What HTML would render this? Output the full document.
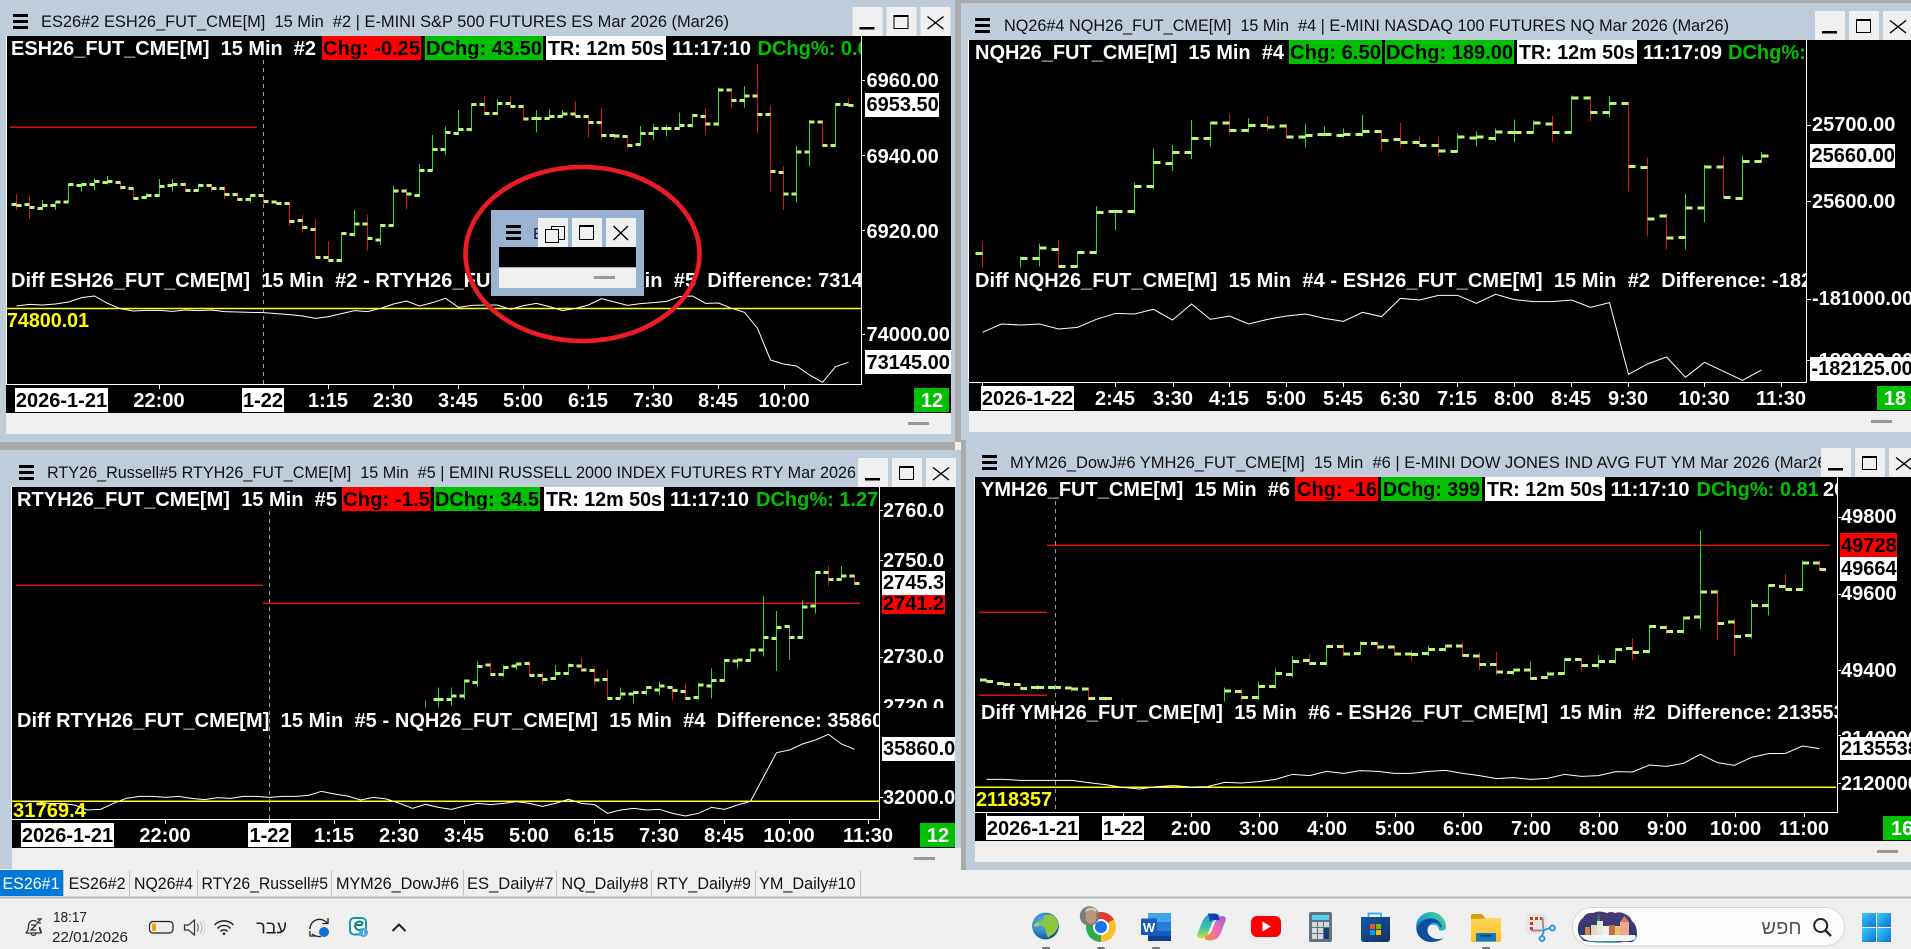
<!DOCTYPE html>
<html><head><meta charset="utf-8"><title>Charts</title>
<style>
html,body{margin:0;padding:0;background:#efefef;overflow:hidden}
svg{display:block}
text{font-family:"Liberation Sans",sans-serif;white-space:pre}
.b{font-weight:bold;font-size:20px;fill:#fff}
.k{font-weight:bold;font-size:20px;fill:#000}
.y{font-weight:bold;font-size:20px;fill:#ff0}
.g{font-weight:bold;font-size:20px;fill:#00c000}
.c{text-anchor:middle}
.d{letter-spacing:.06px}
.t{font-size:16.6px;fill:#111}
.tab{font-size:16.2px;fill:#111}
.w{fill:none;stroke-width:1;shape-rendering:crispEdges;vector-effect:non-scaling-stroke}
.gr{stroke:#1fe01f}.rd{stroke:#e01010}
.tk{fill:none;stroke:#bdf57a;stroke-width:3;shape-rendering:crispEdges;vector-effect:non-scaling-stroke}
.dl{fill:none;stroke:#fff;stroke-width:1;vector-effect:non-scaling-stroke}
.rl{stroke:#d81010;stroke-width:1.5}
.yl{stroke:#ff0;stroke-width:1.5}
.ds{stroke:#999;stroke-width:1;stroke-dasharray:4 4}
.ax{stroke:#fff;stroke-width:1;shape-rendering:crispEdges}
.ic{fill:none;stroke:#333;stroke-width:1.3}
</style></head><body>
<svg width="1911" height="949" viewBox="0 0 1911 949" xmlns="http://www.w3.org/2000/svg" xml:space="preserve">
<defs>
<clipPath id="c1"><rect x="7" y="36" width="854" height="348"/></clipPath>
<clipPath id="c2"><rect x="969" y="40" width="837" height="342"/></clipPath>
<clipPath id="c3"><rect x="12" y="487" width="867" height="332"/></clipPath>
<clipPath id="c4"><rect x="975" y="477" width="862" height="335"/></clipPath>
<clipPath id="t3"><rect x="40" y="450" width="817" height="36"/></clipPath>
<clipPath id="t4"><rect x="1005" y="445" width="816" height="32"/></clipPath>
<g id="btn">
<rect x="0" y="0" width="30" height="29" fill="#f0f0f0"/><rect x="34" y="0" width="30" height="29" fill="#f0f0f0"/><rect x="68" y="0" width="30" height="29" fill="#f0f0f0"/>
<rect x="7" y="20" width="15" height="2.5" fill="#000"/>
<rect x="41.5" y="8.5" width="14" height="13" fill="none" stroke="#000"/><rect x="41" y="8" width="15" height="2" fill="#000"/>
<path d="M75 9.5L91 22M91 9.5L75 22" stroke="#000" stroke-width="1.4" fill="none"/>
</g>
<g id="ham"><rect x="0" y="0" width="15" height="3" fill="#000"/><rect x="0" y="6" width="15" height="3" fill="#000"/><rect x="0" y="12" width="15" height="3" fill="#000"/></g>
<linearGradient id="win" x1="0" y1="0" x2="1" y2="1"><stop offset="0" stop-color="#3ccbf4"/><stop offset="1" stop-color="#0b74d1"/></linearGradient>
<radialGradient id="glb" cx=".35" cy=".35" r=".75"><stop offset="0" stop-color="#5ab6e8"/><stop offset=".6" stop-color="#2a7cc4"/><stop offset="1" stop-color="#123f7a"/></radialGradient>
<linearGradient id="edg" x1="0" y1="1" x2="1" y2="0"><stop offset="0" stop-color="#0f79c8"/><stop offset=".55" stop-color="#1aa8d8"/><stop offset="1" stop-color="#5fdc72"/></linearGradient>
<linearGradient id="cpL" x1="0" y1="0" x2="0" y2="1"><stop offset="0" stop-color="#1f9be8"/><stop offset=".55" stop-color="#36c5a4"/><stop offset="1" stop-color="#d9d83a"/></linearGradient>
<linearGradient id="cpR" x1="1" y1="0" x2="0" y2="1"><stop offset="0" stop-color="#a35ae0"/><stop offset=".55" stop-color="#ef6fa8"/><stop offset="1" stop-color="#f5963a"/></linearGradient>
<linearGradient id="fld" x1="0" y1="0" x2="0" y2="1"><stop offset="0" stop-color="#ffd75e"/><stop offset="1" stop-color="#fbbf24"/></linearGradient>
<linearGradient id="sto" x1="0" y1="0" x2="1" y2="1"><stop offset="0" stop-color="#0d5aa8"/><stop offset="1" stop-color="#17305f"/></linearGradient>
<linearGradient id="sky" x1="0" y1="0" x2="0" y2="1"><stop offset="0" stop-color="#4a3a78"/><stop offset="1" stop-color="#1c3a70"/></linearGradient>
</defs>

<!-- window backgrounds -->
<rect width="1911" height="949" fill="#efefef"/>
<rect x="0" y="0" width="955" height="442" fill="#bfcddb"/>
<rect x="955" y="0" width="956" height="3" fill="#aaa"/>
<rect x="955" y="0" width="6" height="442" fill="#aaa"/>
<rect x="961" y="3" width="950" height="437" fill="#bfcddb"/>
<rect x="966" y="440" width="945" height="430" fill="#bfcddb"/>
<rect x="0" y="442" width="955" height="8" fill="#aaa"/>
<rect x="0" y="450" width="961" height="419" fill="#bfcddb"/>
<rect x="961" y="440" width="5" height="430" fill="#aaa"/>

<!-- PANEL 1 -->
<use href="#ham" x="13" y="14"/>
<text class="t" x="41" y="27" textLength="688" lengthAdjust="spacingAndGlyphs">ES26#2 ESH26_FUT_CME[M]  15 Min  #2 | E-MINI S&amp;P 500 FUTURES ES Mar 2026 (Mar26)</text>
<use href="#btn" x="852.5" y="7"/>
<rect x="6" y="36" width="945" height="377" fill="#000"/>
<rect x="6" y="413" width="945" height="21" fill="#efefef"/>
<rect x="908" y="422" width="21" height="3" fill="#999"/>
<path class="ds" d="M263.5 60V384"/>
<path class="rl" d="M10 127.3H257"/>
<g transform="translate(16.5 0) scale(13 .33333)">
<path class="w gr" d="M2 600V630M3 605V630M4 550V606M5 550V575M6 535V570M7 528V553M10 580V595M11 537V590M12 537V575M14 550V575M18 583V608M25 697V788M26 630V710M28 672V735M29 558V680M31 492V592M32 405V513M33 380V465M34 330V405M35 310V395M37 298V345M40 330V398M41 328V358M42 330V352M48 378V436M49 370V420M50 375V410M51 338V388M52 342V382M54 262V378M56 258V322M60 438V608M61 360V500M63 310V440"/>
<path class="w rd" d="M0 582V630M1 588V656M8 544V570M9 562V600M13 548V575M15 553V578M16 560V597M17 578V603M19 580V605M20 602V617M21 606V678M22 645V698M23 655V775M24 725V785M27 645V752M30 565V628M36 288V345M38 288V325M39 315V362M43 303V352M44 345V412M45 322V420M46 400V420M47 405V445M53 325V402M55 265V325M57 192V400M58 315V575M59 498V630M62 360V440M64 295V320"/>
<path class="tk" d="M0 613h-.38M0 617h.38M1 613h-.38M1 622h.38M2 625h-.38M2 617h.38M3 617h-.38M3 606h.38M4 606h-.38M4 553h.38M5 556h-.38M5 553h.38M6 553h-.38M6 544h.38M7 547h-.38M7 544h.38M8 547h-.38M8 562h.38M9 565h-.38M9 595h.38M10 592h-.38M10 586h.38M11 586h-.38M11 559h.38M12 556h-.38M12 553h.38M13 553h-.38M13 571h.38M14 571h-.38M14 556h.38M15 556h-.38M15 565h.38M16 565h-.38M16 583h.38M17 583h-.38M17 598h.38M18 598h-.38M18 586h.38M19 586h-.38M19 604h.38M20 606h-.38M20 610h.38M21 610h-.38M21 664h.38M22 661h-.38M22 682h.38M23 688h-.38M23 772h.38M24 772h-.38M24 782h.38M25 782h-.38M25 700h.38M26 703h-.38M26 672h.38M27 672h-.38M27 716h.38M28 720h-.38M28 676h.38M29 676h-.38M29 573h.38M30 573h-.38M30 582h.38M31 586h-.38M31 511h.38M32 511h-.38M32 448h.38M33 448h-.38M33 397h.38M34 400h-.38M34 389h.38M35 389h-.38M35 313h.38M36 313h-.38M36 340h.38M37 340h-.38M37 310h.38M38 310h-.38M38 320h.38M39 320h-.38M39 357h.38M40 355h-.38M40 355h.38M41 355h-.38M41 349h.38M42 349h-.38M42 342h.38M43 342h-.38M43 349h.38M44 349h-.38M44 368h.38M45 368h-.38M45 406h.38M46 406h-.38M46 408h.38M47 410h-.38M47 436h.38M48 434h-.38M48 400h.38M49 400h-.38M49 385h.38M50 385h-.38M50 385h.38M51 385h-.38M51 377h.38M52 377h-.38M52 347h.38M53 350h-.38M53 372h.38M54 372h-.38M54 270h.38M55 270h-.38M55 302h.38M56 302h-.38M56 288h.38M57 288h-.38M57 343h.38M58 343h-.38M58 515h.38M59 518h-.38M59 582h.38M60 582h-.38M60 456h.38M61 456h-.38M61 366h.38M62 366h-.38M62 436h.38M63 436h-.38M63 313h.38M64 313h-.38M64 316h.38"/>
</g>
<g clip-path="url(#c1)">
<text class="b" x="11" y="55" textLength="305" lengthAdjust="spacingAndGlyphs">ESH26_FUT_CME[M]  15 Min  #2</text>
<rect x="322" y="36" width="99" height="24" fill="#f00"/><text class="k" x="323" y="55" textLength="97" lengthAdjust="spacingAndGlyphs">Chg: -0.25</text>
<rect x="425" y="36" width="118" height="24" fill="#00c000"/><text class="k" x="426" y="55" textLength="116" lengthAdjust="spacingAndGlyphs">DChg: 43.50</text>
<rect x="546" y="36" width="120" height="24" fill="#fff"/><text class="k" x="548" y="55" textLength="116" lengthAdjust="spacingAndGlyphs">TR: 12m 50s</text>
<text class="b" x="672" y="55" textLength="79" lengthAdjust="spacingAndGlyphs">11:17:10</text>
<text class="g" x="757.5" y="55">DChg%: 0.61</text>
<text class="b d" x="11" y="287">Diff ESH26_FUT_CME[M]  15 Min  #2 - RTYH26_FUT_CME[M]  15 Min  #5  Difference: 73145</text>
</g>
<path class="yl" d="M7 308.5H861"/>
<g transform="translate(16.5 0) scale(13 .33333)"><polyline class="dl" points="0,918 1,913 2,915 3,912 4,906 5,893 6,888 7,910 8,926 9,933 10,931 11,931 12,934 13,930 14,932 15,930 16,935 17,936 18,937 19,938 20,941 21,944 22,948 23,955 24,950 25,941 26,932 27,935 28,925 29,912 30,903 31,918 32,908 33,895 34,922 35,916 36,915 37,915 38,928 39,917 40,910 41,920 42,932 43,925 44,915 45,896 46,906 47,916 48,911 49,908 50,904 51,890 52,888 53,910 54,909 55,925 56,937 57,985 58,1080 59,1092 60,1098 61,1125 62,1147 63,1100 64,1087"/></g>
<text class="y" x="7" y="327" textLength="82" lengthAdjust="spacingAndGlyphs">74800.01</text>
<path class="ax" d="M6.5 36V384M861.5 36V384.5M6 384.5H862M861 80.5H865M861 155.5H865M861 230.5H865M861 334.5H865"/>
<path class="ax" d="M159.5 384V389M328.5 384V389M393.5 384V389M458.5 384V389M523.5 384V389M588.5 384V389M653.5 384V389M718.5 384V389M784.5 384V389"/>
<text class="b" x="866.5" y="87">6960.00</text>
<rect x="865" y="93" width="74" height="24" fill="#fff"/><text class="k" x="866.5" y="111">6953.50</text>
<text class="b" x="866.5" y="163">6940.00</text>
<text class="b" x="866.5" y="238">6920.00</text>
<text class="b" x="866.5" y="341">74000.00</text>
<rect x="865" y="350" width="86" height="24" fill="#fff"/><text class="k" x="866.5" y="369">73145.00</text>
<rect x="15" y="388" width="93" height="24" fill="#fff"/><text class="k c" x="61.5" y="407">2026-1-21</text>
<text class="b c" x="159" y="407">22:00</text>
<rect x="242" y="388" width="42" height="24" fill="#fff"/><text class="k c" x="263" y="407">1-22</text>
<text class="b c" x="328" y="407">1:15</text><text class="b c" x="393" y="407">2:30</text><text class="b c" x="458" y="407">3:45</text><text class="b c" x="523" y="407">5:00</text><text class="b c" x="588" y="407">6:15</text><text class="b c" x="653" y="407">7:30</text><text class="b c" x="718" y="407">8:45</text><text class="b c" x="784" y="407">10:00</text>
<rect x="914" y="388" width="35" height="24" fill="#00c000"/><text class="b c" x="932" y="407">12</text>

<!-- floating mini window + ellipse -->
<rect x="491" y="210" width="153" height="86" fill="#9ab3d0"/>
<use href="#ham" x="506" y="225"/>
<text x="533" y="239" style="font-size:16px;fill:#14145a">E</text>
<rect x="538" y="218" width="30" height="29" fill="#f0f0f0"/><rect x="572" y="218" width="30" height="29" fill="#f0f0f0"/><rect x="606" y="218" width="30" height="29" fill="#f0f0f0"/>
<rect x="551.5" y="226.5" width="13" height="13" fill="#f0f0f0" stroke="#000"/><rect x="545.5" y="229.5" width="13" height="13" fill="#f0f0f0" stroke="#000"/>
<rect x="579.5" y="225.5" width="14" height="14" fill="none" stroke="#000"/><rect x="579" y="225" width="15" height="2" fill="#000"/>
<path d="M613.5 226L628 240M628 226L613.5 240" stroke="#000" stroke-width="1.4" fill="none"/>
<rect x="499" y="247" width="137" height="20" fill="#000"/>
<rect x="499" y="268" width="137" height="20" fill="#efefef"/>
<rect x="594" y="276" width="21" height="3" fill="#999"/>
<ellipse cx="582.5" cy="254" rx="117" ry="87" fill="none" stroke="#ed1c24" stroke-width="4.6"/>

<!-- PANEL 2 -->
<use href="#ham" x="975" y="18"/>
<text class="t" x="1004" y="31" textLength="725" lengthAdjust="spacingAndGlyphs">NQ26#4 NQH26_FUT_CME[M]  15 Min  #4 | E-MINI NASDAQ 100 FUTURES NQ Mar 2026 (Mar26)</text>
<use href="#btn" x="1815" y="11"/>
<rect x="969" y="40" width="942" height="371" fill="#000"/>
<rect x="969" y="411" width="942" height="21" fill="#efefef"/>
<rect x="1871" y="420" width="21" height="3" fill="#999"/>
<g transform="translate(982.5 0) scale(19 .33333)">
<path class="w gr" d="M2 770V803M3 730V800M5 755V803M6 620V760M7 632V692M8 547V642M9 447V568M10 435V513M11 360V477M12 365V440M14 355V398M17 372V443M18 380V410M19 385V412M20 345V410M25 400V458M26 395V440M27 385V425M28 358V426M29 362V400M31 286V400M33 288V353M37 582V748M38 495V668M40 468V597M41 456V488"/>
<path class="w rd" d="M0 726V802M4 720V803M13 340V405M15 348V393M16 372V416M21 392V452M22 369V443M23 410V440M24 412V470M30 348V426M32 290V365M34 305V575M35 473V710M36 640V748M39 470V592"/>
<path class="tk" d="M0 760h-.38M2 775h.38M3 775h-.38M3 744h.38M4 748h-.38M4 800h.38M5 800h-.38M5 757h.38M6 757h-.38M6 637h.38M7 634h-.38M7 634h.38M8 634h-.38M8 560h.38M9 560h-.38M9 488h.38M10 490h-.38M10 457h.38M11 457h-.38M11 415h.38M12 415h-.38M12 369h.38M13 369h-.38M13 391h.38M14 391h-.38M14 376h.38M15 376h-.38M15 381h.38M16 378h-.38M16 411h.38M17 411h-.38M17 407h.38M18 403h-.38M18 403h.38M19 407h-.38M19 403h.38M20 403h-.38M20 395h.38M21 395h-.38M21 421h.38M22 418h-.38M22 427h.38M23 427h-.38M23 436h.38M24 436h-.38M24 453h.38M25 455h-.38M25 411h.38M26 414h-.38M26 411h.38M27 415h-.38M27 396h.38M28 397h-.38M28 397h.38M29 397h-.38M29 369h.38M30 372h-.38M30 397h.38M31 397h-.38M31 294h.38M32 294h-.38M32 337h.38M33 337h-.38M33 310h.38M34 310h-.38M34 500h.38M35 502h-.38M35 657h.38M36 648h-.38M36 714h.38M37 712h-.38M37 624h.38M38 624h-.38M38 501h.38M39 501h-.38M39 592h.38M40 595h-.38M40 484h.38M41 484h-.38M41 468h.38"/>
</g>
<rect x="969" y="268" width="842" height="114" fill="#000"/>
<g clip-path="url(#c2)">
<text class="b" x="975" y="59" textLength="309" lengthAdjust="spacingAndGlyphs">NQH26_FUT_CME[M]  15 Min  #4</text>
<rect x="1289" y="40" width="93" height="24" fill="#00c000"/><text class="k" x="1290" y="59" textLength="91" lengthAdjust="spacingAndGlyphs">Chg: 6.50</text>
<rect x="1385" y="40" width="129" height="24" fill="#00c000"/><text class="k" x="1386" y="59" textLength="127" lengthAdjust="spacingAndGlyphs">DChg: 189.00</text>
<rect x="1517" y="40" width="120" height="24" fill="#fff"/><text class="k" x="1519" y="59" textLength="116" lengthAdjust="spacingAndGlyphs">TR: 12m 50s</text>
<text class="b" x="1643" y="59" textLength="79" lengthAdjust="spacingAndGlyphs">11:17:09</text>
<text class="g" x="1728" y="59">DChg%:</text>
<text class="b d" x="975" y="287">Diff NQH26_FUT_CME[M]  15 Min  #4 - ESH26_FUT_CME[M]  15 Min  #2  Difference: -182125</text>
</g>
<g transform="translate(982.5 0) scale(19 .33333)"><polyline class="dl" points="0,997 1,972 2,975 3,972 4,987 5,982 6,958 7,940 8,942 9,928 10,960 11,912 12,958 13,948 14,972 15,958 16,948 17,942 18,955 19,964 20,937 21,950 22,895 23,900 24,886 25,886 26,910 27,883 28,899 29,905 30,905 31,900 32,922 33,908 34,1123 35,1092 36,1071 37,1132 38,1087 39,1114 40,1141 41,1110"/></g>
<path class="ax" d="M968.5 40V382M1806.5 40V382.5M969 382.5H1807M1806 125.5H1811M1806 201.5H1811M1806 299.5H1811M1806 360.5H1811"/>
<path class="ax" d="M982.5 382V387M1115.5 382V387M1173.5 382V387M1229.5 382V387M1286.5 382V387M1343.5 382V387M1400.5 382V387M1457.5 382V387M1514.5 382V387M1571.5 382V387M1628.5 382V387M1704.5 382V387M1781.5 382V387"/>
<text class="b" x="1812" y="131">25700.00</text>
<rect x="1810" y="144" width="85" height="24" fill="#fff"/><text class="k" x="1811.5" y="162">25660.00</text>
<text class="b" x="1812" y="208">25600.00</text>
<text class="b" x="1812" y="305">-181000.00</text>
<text class="b" x="1812" y="367">-182000.00</text>
<rect x="1810" y="357" width="101" height="24" fill="#fff"/><text class="k" x="1811.5" y="375">-182125.00</text>
<rect x="981" y="386" width="93" height="24" fill="#fff"/><text class="k c" x="1027.5" y="405">2026-1-22</text>
<text class="b c" x="1115" y="405">2:45</text><text class="b c" x="1173" y="405">3:30</text><text class="b c" x="1229" y="405">4:15</text><text class="b c" x="1286" y="405">5:00</text><text class="b c" x="1343" y="405">5:45</text><text class="b c" x="1400" y="405">6:30</text><text class="b c" x="1457" y="405">7:15</text><text class="b c" x="1514" y="405">8:00</text><text class="b c" x="1571" y="405">8:45</text><text class="b c" x="1628" y="405">9:30</text><text class="b c" x="1704" y="405">10:30</text><text class="b c" x="1781" y="405">11:30</text>
<rect x="1877" y="386" width="34" height="24" fill="#00c000"/><text class="b c" x="1895" y="405">18</text>

<!-- PANEL 3 -->
<use href="#ham" x="19" y="465"/>
<g clip-path="url(#t3)"><text class="t" x="47" y="478" textLength="809" lengthAdjust="spacingAndGlyphs">RTY26_Russell#5 RTYH26_FUT_CME[M]  15 Min  #5 | EMINI RUSSELL 2000 INDEX FUTURES RTY Mar 2026</text></g>
<use href="#btn" x="858" y="458"/>
<rect x="12" y="487" width="943" height="361" fill="#000"/>
<rect x="12" y="848" width="949" height="21" fill="#efefef"/>
<rect x="914" y="857" width="21" height="3" fill="#999"/>
<path class="rl" d="M16 585.3H263M263 603.3H860"/>
<text class="b" x="883" y="713">2720.0</text>
<g transform="translate(425.5 440) scale(13 .33333)">
<path class="w gr" d="M0 782V803M1 742V803M2 742V797M3 718V778M4 664V740M6 675V710M7 668V690M10 675V720M11 670V705M15 742V775M16 752V790M17 738V765M18 726V765M21 728V778M22 685V775M23 655V725M24 655V685M25 628V665M26 468V650M27 513V693M29 482V595M30 395V520M32 378V420"/>
<path class="w rd" d="M5 668V708M8 665V708M9 695V735M12 652V695M13 682V735M14 688V778M19 740V782M20 730V780M31 378V438M33 405V435"/>
<path class="w" stroke="#888" d="M28 555V660"/>
<path class="tk" d="M1 778h-.38M1 778h.38M2 778h-.38M2 768h.38M3 768h-.38M3 723h.38M4 728h-.38M4 679h.38M5 675h-.38M5 704h.38M6 704h-.38M6 682h.38M7 678h-.38M7 672h.38M8 670h-.38M8 706h.38M9 706h-.38M9 718h.38M10 715h-.38M10 700h.38M11 700h-.38M11 676h.38M12 678h-.38M12 690h.38M13 692h-.38M13 720h.38M14 718h-.38M14 775h.38M15 775h-.38M15 762h.38M16 762h-.38M16 758h.38M17 758h-.38M17 743h.38M18 750h-.38M18 738h.38M19 743h-.38M19 752h.38M20 755h-.38M20 775h.38M21 772h-.38M21 735h.38M22 738h-.38M22 722h.38M23 722h-.38M23 662h.38M24 663h-.38M24 660h.38M25 662h-.38M25 630h.38M26 630h-.38M26 592h.38M27 595h-.38M27 562h.38M28 560h-.38M28 592h.38M29 592h-.38M29 501h.38M30 498h-.38M30 397h.38M31 397h-.38M31 418h.38M32 418h-.38M32 408h.38M33 408h-.38M33 430h.38"/>
</g>
<rect x="12" y="708" width="943" height="111" fill="#000"/>
<path class="ds" d="M269.5 511V819"/>
<g clip-path="url(#c3)">
<text class="b" x="17" y="506" textLength="320" lengthAdjust="spacingAndGlyphs">RTYH26_FUT_CME[M]  15 Min  #5</text>
<rect x="342" y="487" width="88.5" height="24" fill="#f00"/><text class="k" x="343" y="506" textLength="87" lengthAdjust="spacingAndGlyphs">Chg: -1.5</text>
<rect x="434" y="487" width="106" height="24" fill="#00c000"/><text class="k" x="435" y="506" textLength="104" lengthAdjust="spacingAndGlyphs">DChg: 34.5</text>
<rect x="544" y="487" width="120" height="24" fill="#fff"/><text class="k" x="546" y="506" textLength="116" lengthAdjust="spacingAndGlyphs">TR: 12m 50s</text>
<text class="b" x="670" y="506" textLength="79" lengthAdjust="spacingAndGlyphs">11:17:10</text>
<text class="g" x="756" y="506">DChg%: 1.27</text>
<text class="b d" x="17" y="727">Diff RTYH26_FUT_CME[M]  15 Min  #5 - NQH26_FUT_CME[M]  15 Min  #4  Difference: 35860</text>
</g>
<path class="yl" d="M12 801.3H879"/>
<g transform="translate(22.5 440) scale(13 .33333)"><polyline class="dl" points="0,1085 1,1085 2,1090 3,1090 4,1095 5,1110 6,1108 7,1090 8,1075 9,1069 10,1069 11,1072 12,1069 13,1075 14,1079 15,1073 16,1075 17,1069 18,1069 19,1072 20,1069 21,1069 22,1066 23,1054 24,1062 25,1068 26,1080 27,1072 28,1077 29,1090 30,1105 31,1093 32,1102 33,1108 34,1098 35,1090 36,1094 37,1090 38,1085 39,1090 40,1099 41,1090 42,1078 43,1090 44,1094 45,1120 46,1110 47,1105 48,1110 49,1108 50,1120 51,1128 52,1120 53,1102 54,1108 55,1095 56,1084 57,1011 58,938 59,930 60,912 61,900 62,883 63,912 64,928"/></g>
<g clip-path="url(#c3)"><text class="y" x="13" y="817" textLength="73" lengthAdjust="spacingAndGlyphs">31769.4</text></g>
<path class="ax" d="M11.5 487V819M879.5 487V819.5M12 819.5H880M879 510.5H883M879 560.5H883M879 657.5H883M879 797.5H883"/>
<path class="ax" d="M165.5 819V824M269.5 819V824M334.5 819V824M399.5 819V824M464.5 819V824M529.5 819V824M594.5 819V824M659.5 819V824M724.5 819V824M789.5 819V824M868.5 819V824"/>
<text class="b" x="883" y="517">2760.0</text>
<text class="b" x="883" y="567">2750.0</text>
<rect x="882" y="571" width="63" height="24" fill="#fff"/><text class="k" x="883" y="589">2745.3</text>
<rect x="882" y="595" width="63" height="19" fill="#f00"/><text class="k" x="883" y="610">2741.2</text>
<text class="b" x="883" y="663">2730.0</text>
<rect x="882" y="737" width="73" height="24" fill="#fff"/><text class="k" x="883" y="755">35860.0</text>
<text class="b" x="883" y="804">32000.0</text>
<rect x="21" y="823" width="93" height="24" fill="#fff"/><text class="k c" x="67.5" y="842">2026-1-21</text>
<text class="b c" x="165" y="842">22:00</text>
<rect x="248" y="823" width="43" height="24" fill="#fff"/><text class="k c" x="269.5" y="842">1-22</text>
<text class="b c" x="334" y="842">1:15</text><text class="b c" x="399" y="842">2:30</text><text class="b c" x="464" y="842">3:45</text><text class="b c" x="529" y="842">5:00</text><text class="b c" x="594" y="842">6:15</text><text class="b c" x="659" y="842">7:30</text><text class="b c" x="724" y="842">8:45</text><text class="b c" x="789" y="842">10:00</text><text class="b c" x="868" y="842">11:30</text>
<rect x="920" y="823" width="35" height="24" fill="#00c000"/><text class="b c" x="938" y="842">12</text>

<!-- PANEL 4 -->
<use href="#ham" x="982" y="455"/>
<g clip-path="url(#t4)"><text class="t" x="1010" y="468" textLength="822" lengthAdjust="spacingAndGlyphs">MYM26_DowJ#6 YMH26_FUT_CME[M]  15 Min  #6 | E-MINI DOW JONES IND AVG FUT YM Mar 2026 (Mar26)</text></g>
<use href="#btn" x="1821" y="448"/>
<rect x="975" y="477" width="936" height="364" fill="#000"/>
<rect x="975" y="841" width="936" height="21" fill="#efefef"/>
<rect x="1877" y="850" width="21" height="3" fill="#999"/>
<path class="rl" d="M1047 545.3H1830M979 612.3H1047M979 695.3H1047"/>
<g transform="translate(986.5 440) scale(17 .33333)">
<path class="w gr" d="M3 735V750M4 736V750M14 743V785M16 725V780M17 685V745M18 648V712M20 615V675M22 605V645M26 616V648M27 615V635M31 688V705M33 695V715M34 655V705M36 645V685M37 625V670M39 555V640M41 530V580M42 272V567M45 480V595M46 435V527M48 362V452"/>
<path class="w rd" d="M0 715V730M1 726V745M2 730V750M5 740V755M6 742V780M7 770V785M8 778V785M15 748V785M19 642V680M21 610V650M23 605V630M24 617V650M25 630V666M28 606V650M29 636V690M30 636V705M35 655V695M38 595V660M40 555V585M43 448V602M44 535V650M47 402V450M49 362V392"/>
<path class="w" stroke="#888" d="M32 665V720"/>
<path class="tk" d="M0 720h-.38M0 724h.38M1 731h-.38M1 734h.38M2 734h-.38M2 745h.38M3 742h-.38M3 743h.38M4 742h-.38M4 743h.38M5 744h-.38M5 747h.38M6 747h-.38M6 776h.38M7 776h-.38M7 776h.38M14 753h.38M15 755h-.38M15 772h.38M16 772h-.38M16 740h.38M17 740h-.38M17 701h.38M18 704h-.38M18 664h.38M19 662h-.38M19 670h.38M20 670h-.38M20 619h.38M21 619h-.38M21 642h.38M22 640h-.38M22 610h.38M23 610h-.38M23 621h.38M24 621h-.38M24 642h.38M25 642h-.38M25 644h.38M26 640h-.38M26 629h.38M27 629h-.38M27 618h.38M28 618h-.38M28 646h.38M29 648h-.38M29 673h.38M30 673h-.38M30 696h.38M31 698h-.38M31 690h.38M32 690h-.38M32 715h.38M33 712h-.38M33 702h.38M34 700h-.38M34 658h.38M35 658h-.38M35 677h.38M36 677h-.38M36 664h.38M37 664h-.38M37 628h.38M38 625h-.38M38 638h.38M39 634h-.38M39 559h.38M40 562h-.38M40 575h.38M41 575h-.38M41 534h.38M42 531h-.38M42 456h.38M43 456h-.38M43 550h.38M44 546h-.38M44 590h.38M45 586h-.38M45 496h.38M46 496h-.38M46 437h.38M47 440h-.38M47 449h.38M48 449h-.38M48 369h.38M49 369h-.38M49 388h.38"/>
</g>
<rect x="975" y="702" width="936" height="110" fill="#000"/>
<path class="ds" d="M1055.5 501V812"/>
<g clip-path="url(#c4)">
<text class="b" x="981" y="496" textLength="309" lengthAdjust="spacingAndGlyphs">YMH26_FUT_CME[M]  15 Min  #6</text>
<rect x="1295" y="477" width="83" height="24" fill="#f00"/><text class="k" x="1297" y="496" textLength="80" lengthAdjust="spacingAndGlyphs">Chg: -16</text>
<rect x="1381" y="477" width="101" height="24" fill="#00c000"/><text class="k" x="1383" y="496" textLength="97" lengthAdjust="spacingAndGlyphs">DChg: 399</text>
<rect x="1485" y="477" width="120" height="24" fill="#fff"/><text class="k" x="1487" y="496" textLength="116" lengthAdjust="spacingAndGlyphs">TR: 12m 50s</text>
<text class="b" x="1610.5" y="496" textLength="79" lengthAdjust="spacingAndGlyphs">11:17:10</text>
<text class="g" x="1696.5" y="496">DChg%: 0.81</text>
<text class="b" x="1823" y="496">2026</text>
<text class="b d" x="981" y="719">Diff YMH26_FUT_CME[M]  15 Min  #6 - ESH26_FUT_CME[M]  15 Min  #2  Difference: 213553</text>
</g>
<path class="yl" d="M975 787.3H1836"/>
<g transform="translate(986.5 440) scale(17 .33333)"><polyline class="dl" points="0,1018 1,1018 2,1021 3,1021 4,1021 5,1021 6,1028 7,1034 8,1042 9,1047 10,1040 11,1037 12,1041 13,1040 14,1027 15,1029 16,1025 17,1018 18,1003 19,1007 20,994 21,1000 22,992 23,994 24,1000 25,1000 26,994 27,991 28,1000 29,1007 30,1016 31,1013 32,1018 33,1015 34,1003 35,1009 36,1007 37,995 38,996 39,975 40,979 41,970 42,943 43,968 44,976 45,952 46,941 47,940 48,918 49,926"/></g>
<text class="y" x="976" y="806" textLength="76" lengthAdjust="spacingAndGlyphs">2118357</text>
<path class="ax" d="M974.5 477V812M1837.5 477V812.5M975 812.5H1838M1837 517.5H1841M1837 594.5H1841M1837 670.5H1841M1837 735.5H1841M1837 783.5H1841"/>
<path class="ax" d="M986.5 812V817M1123.5 812V817M1191.5 812V817M1259.5 812V817M1327.5 812V817M1395.5 812V817M1463.5 812V817M1531.5 812V817M1599.5 812V817M1667.5 812V817M1735.5 812V817M1804.5 812V817"/>
<text class="b" x="1841" y="523">49800</text>
<rect x="1840" y="533" width="57" height="24" fill="#f00"/><text class="k" x="1841" y="552">49728</text>
<rect x="1840" y="557" width="57" height="24" fill="#fff"/><text class="k" x="1841" y="575">49664</text>
<text class="b" x="1841" y="600">49600</text>
<text class="b" x="1841" y="677">49400</text>
<text class="b" x="1841" y="745">2140000</text>
<rect x="1840" y="737" width="71" height="23" fill="#fff"/><text class="k" x="1841" y="755">2135538</text>
<text class="b" x="1841" y="790">2120000</text>
<rect x="986" y="816" width="93" height="24" fill="#fff"/><text class="k c" x="1032.5" y="835">2026-1-21</text>
<rect x="1102" y="816" width="42" height="24" fill="#fff"/><text class="k c" x="1123" y="835">1-22</text>
<text class="b c" x="1191" y="835">2:00</text><text class="b c" x="1259" y="835">3:00</text><text class="b c" x="1327" y="835">4:00</text><text class="b c" x="1395" y="835">5:00</text><text class="b c" x="1463" y="835">6:00</text><text class="b c" x="1531" y="835">7:00</text><text class="b c" x="1599" y="835">8:00</text><text class="b c" x="1667" y="835">9:00</text><text class="b c" x="1735.5" y="835">10:00</text><text class="b c" x="1804" y="835">11:00</text>
<rect x="1883" y="816" width="28" height="24" fill="#00c000"/><text class="b" x="1891" y="835">16</text>

<!-- TABS -->
<rect x="0" y="870" width="63" height="26" fill="#0078d7"/>
<path d="M63.5 870V896M129.5 870V896M197.5 870V896M331.5 870V896M463.5 870V896M556.5 870V896M651.5 870V896M755.5 870V896M860.5 870V896" stroke="#c4c4c4" fill="none" shape-rendering="crispEdges"/>
<rect x="0" y="896.5" width="1911" height="2" fill="#b4b4b4"/>
<text class="tab" x="2.5" y="889" textLength="57" lengthAdjust="spacingAndGlyphs" style="fill:#fff">ES26#1</text>
<text class="tab" x="68.6" y="889" textLength="57" lengthAdjust="spacingAndGlyphs">ES26#2</text>
<text class="tab" x="134" y="889" textLength="59" lengthAdjust="spacingAndGlyphs">NQ26#4</text>
<text class="tab" x="201.5" y="889" textLength="126.5" lengthAdjust="spacingAndGlyphs">RTY26_Russell#5</text>
<text class="tab" x="336" y="889" textLength="123" lengthAdjust="spacingAndGlyphs">MYM26_DowJ#6</text>
<text class="tab" x="467" y="889" textLength="86.5" lengthAdjust="spacingAndGlyphs">ES_Daily#7</text>
<text class="tab" x="561.5" y="889" textLength="87" lengthAdjust="spacingAndGlyphs">NQ_Daily#8</text>
<text class="tab" x="656.5" y="889" textLength="94.5" lengthAdjust="spacingAndGlyphs">RTY_Daily#9</text>
<text class="tab" x="759" y="889" textLength="96.5" lengthAdjust="spacingAndGlyphs">YM_Daily#10</text>

<!-- TRAY LEFT -->
<path class="ic" d="M25.500 933c2.500-1.500 3-4 3-7 0-3.500 2.500-5.500 5-5.500 1 0 2 .3 3 1M39.500 927c0 2.500 .8 4.500 2 6zM25.500 933h16M31 933.500a2.600 2.600 0 0 0 5 0"/>
<path d="M31 925h5l-5 5h5M37 919h4l-4 4h4" fill="none" stroke="#333" stroke-width="1.300"/>
<text x="53" y="922" textLength="34" lengthAdjust="spacingAndGlyphs" style="font-size:15px;fill:#222">18:17</text>
<text x="52" y="942" textLength="76" lengthAdjust="spacingAndGlyphs" style="font-size:15px;fill:#222">22/01/2026</text>
<rect x="149.500" y="921.500" width="23.500" height="11.500" rx="3.500" fill="none" stroke="#222" stroke-width="1.200"/>
<rect x="152" y="923.500" width="4" height="7.500" rx="1" fill="#f0a30a"/>
<path d="M184.500 925h4l6-5v15l-6-5h-4z" fill="none" stroke="#333" stroke-width="1.200"/>
<path d="M197 923.500q2.500 4 0 8" fill="none" stroke="#666" stroke-width="1.100"/><path d="M200 921.500q4 6 0 12" fill="none" stroke="#bbb" stroke-width="1.100"/><path d="M203 920q4 7.500 0 15" fill="none" stroke="#d8d8d8" stroke-width="1"/>
<path d="M214.500 925a13 13 0 0 1 19 0M217.500 928.500a8.500 8.500 0 0 1 13 0M220.500 931.500a4.500 4.500 0 0 1 7 0" fill="none" stroke="#222" stroke-width="1.400"/><circle cx="224" cy="933.700" r="1.300" fill="#222"/>
<text x="271.500" y="933.500" text-anchor="middle" style="font-size:18px;fill:#222">עבר</text>
<path d="M310 929a9.500 9.500 0 0 1 17-6M321 936.500q-5 .5-9-2.500" fill="none" stroke="#222" stroke-width="1.300"/><path d="M328 918v5.500h-5.500M310 931v5h5.500" fill="none" stroke="#222" stroke-width="1.300"/>
<circle cx="324" cy="932" r="5" fill="#0f6fd8"/>
<rect x="350" y="918" width="16" height="16.500" rx="4" fill="#f4fbfb" stroke="#159aa0" stroke-width="2"/>
<path d="M362.500 928.500a4.200 4.200 0 1 1 0-5.500l-1 2h-6" fill="none" stroke="#127f86" stroke-width="2"/>
<circle cx="363.500" cy="932.500" r="4.500" fill="#4aa3e0"/><rect x="363" y="930.500" width="1.200" height="4.500" fill="#fff"/>
<path d="M392.500 931l6.500-6.500 6.500 6.500" fill="none" stroke="#222" stroke-width="2"/>

<!-- TASKBAR ICONS -->
<circle cx="1045.500" cy="926" r="13.400" fill="url(#glb)"/>
<path d="M1043 916q6-3 11 0 4 4 4.500 9-1 5-5 9-4 2-5.500 4l-2-5-1-5-5-3 1-4 3-1z" fill="#8fc63f"/>
<path d="M1033 926q3-4 6-4l1 3-4 2z" fill="#9fd24f"/>
<rect x="1042" y="947" width="8" height="3" rx="1.500" fill="#777"/>
<path d="M1091.500 921.500A11 11 0 0 1 1110.500 921.500" fill="none" stroke="#e33b2e" stroke-width="8"/>
<path d="M1110.500 921.500A11 11 0 0 1 1101 938" fill="none" stroke="#fbc02d" stroke-width="8"/>
<path d="M1101 938A11 11 0 0 1 1091.500 921.500" fill="none" stroke="#2fa84f" stroke-width="8"/>
<circle cx="1101" cy="927" r="8" fill="#fff"/><circle cx="1101" cy="927" r="6" fill="#1a73e8"/>
<circle cx="1089.500" cy="916" r="9.700" fill="#7c7c72"/><ellipse cx="1091" cy="916.500" rx="5.500" ry="7.500" fill="#b8957f"/><path d="M1085 913q6-6 12 0l-1-4q-5-3-10 0z" fill="#cfc9c0"/>
<rect x="1097" y="947" width="8" height="3" rx="1.500" fill="#777"/>
<rect x="1148" y="913" width="23" height="28" rx="1.500" fill="#2b7cd3"/>
<rect x="1148" y="913" width="23" height="9" fill="#41a5ee"/><rect x="1148" y="931" width="23" height="5" fill="#185abd"/><rect x="1148" y="936" width="23" height="5" fill="#103f91"/>
<rect x="1141" y="918.500" width="16" height="16.500" rx="1" fill="#1a5bbd"/>
<text x="1149" y="932" text-anchor="middle" style="font-size:13px;font-weight:bold;fill:#fff">W</text>
<rect x="1152" y="947" width="8" height="3" rx="1.500" fill="#777"/>
<path d="M1214 913.500c-7 0-10 4-12 9l-4.500 11c-1 3 1 5 4 5 3 0 5-2 6-4l4-10c1-3 3-5 6-5l2-4c-1-1.500-3-2-5.500-2z" fill="url(#cpL)"/>
<path d="M1209 940.500c7 0 10-3 12-8l4.500-12c1-3-1-4.500-3.500-4.500-3 0-5 2-6 4l-4 10c-1 3-3 5-6 5l-1.500 4c1 1 3 1.500 5 1.500z" fill="url(#cpR)"/>
<path d="M1208 913.500h6c2 0 3.500 1 4.500 3l1 3.500h-5c-2.500 0-3.500 .5-4.500 2z" fill="#0f3fa8"/>
<rect x="1251" y="916" width="30" height="21" rx="6" fill="#f00"/><path d="M1262.500 921.500v10l8.500-5z" fill="#fff"/>
<rect x="1309" y="912" width="23" height="30" rx="2" fill="#66727d"/>
<rect x="1312" y="915" width="17" height="5" fill="#4fd0ee"/>
<path d="M1312 922h5v5h-5zM1318 922h5v5h-5zM1324 922h5v5h-5zM1312 928h5v5h-5zM1318 928h5v5h-5zM1312 934h5v5h-5zM1318 934h5v5h-5z" fill="#d6dadd"/>
<rect x="1324" y="928" width="5" height="11" fill="#123f7a"/>
<path d="M1368.500 917v-3.500h12.500v3.500" fill="none" stroke="#2bb0ea" stroke-width="1.700"/>
<path d="M1361 917h29v22q0 3-3 3h-23q-3 0-3-3z" fill="url(#sto)"/>
<rect x="1370" y="924" width="5" height="5" fill="#f25022"/><rect x="1376" y="924" width="5" height="5" fill="#7fba00"/><rect x="1370" y="930" width="5" height="5" fill="#00a4ef"/><rect x="1376" y="930" width="5" height="5" fill="#ffb900"/>
<circle cx="1431" cy="927" r="15" fill="url(#edg)"/>
<path d="M1446 929c0 3-1 7-4 10-3 2-8 3-12 3l-4-8c0-8 5-10 9-9 3 1 4 3 4 5 2 1 4 1 7-1z" fill="#efefef"/>
<path d="M1417 928c-1 8 6 14 15 14 5 0 9-2 12-4-5 2-11 1-14-2-4-4-3-11 2-13 4-1 7 1 8 4l2 .5c-1-6-7-10-13-9-7 1-11 5-12 10z" fill="#0b4f9e"/>
<path d="M1471 918h30v22q0 2-2 2h-26q-2 0-2-2z" fill="url(#fld)"/>
<path d="M1471 919v-3q0-2 2-2h9l3.500 4.500z" fill="#d99a0c"/>
<rect x="1476" y="933" width="20" height="8.500" rx="1" fill="#0f78c4"/><rect x="1480" y="935" width="12" height="1.500" fill="#0a3f78"/>
<rect x="1482" y="947" width="8" height="3" rx="1.500" fill="#777"/>
<rect x="1526" y="913" width="21" height="21" rx="3" fill="#e6e6e6"/>
<path d="M1530 917h3v3h-3zM1535 917h3v3h-3zM1530 922h3v3h-3zM1530 927h3v3h-3zM1540 917h2v3h-2z" fill="#cc3a12"/>
<path d="M1542.500 917.500l1 12.500M1531 930.500h13.500" stroke="#8e8e8e" stroke-width="1.800" fill="none"/>
<path d="M1544 930l6-2M1544 930l-2 6" stroke="#1b8fe0" stroke-width="1.600" fill="none"/>
<circle cx="1552.500" cy="928" r="2.500" fill="none" stroke="#1b8fe0" stroke-width="1.700"/><circle cx="1542" cy="938.500" r="2.500" fill="none" stroke="#1b8fe0" stroke-width="1.700"/>

<!-- SEARCH -->
<rect x="1572.500" y="907.500" width="272" height="38.500" rx="19" fill="#fbfbfb" stroke="#d6d6d6"/>
<path d="M1578 932q-1-10 5-14 3-6 10-5 6-3 14 0 4-2 8 0 5-2 10 1 5 2 7 7 5 4 5 13 0 6-5 8l-8 0q-20 2-40-1-5-4-6-9z" fill="url(#sky)"/>
<path d="M1580 935h55q2 3-1 5-6 2-15 1-12 2-24 0-10 1-15-6z" fill="#f2f7fb"/>
<path d="M1592 941h28l-6 1.500h-16z" fill="#2a9a8f"/>
<rect x="1585" y="927" width="5" height="8" fill="#c98a4e"/><rect x="1591" y="925" width="6" height="10" fill="#e8d9b5"/><rect x="1597" y="921" width="6" height="14" fill="#e9e6da"/><rect x="1603" y="926" width="6" height="9" fill="#eef0f0"/><rect x="1609" y="925" width="6" height="10" fill="#c96a3a"/><rect x="1615" y="926" width="5" height="9" fill="#e8c06a"/><rect x="1620" y="922" width="9" height="13" fill="#f0a58c"/>
<path d="M1600 921l-1-8-2 8zM1620 922l4.500-6 4.500 6z" fill="#2f8f5a"/>
<path d="M1620 922l4.500-6 4.500 6z" fill="#d97a66"/>
<text x="1781.500" y="934" text-anchor="middle" style="font-size:20px;fill:#555">חפש</text>
<circle cx="1820.700" cy="925.500" r="6.500" fill="none" stroke="#222" stroke-width="2"/><path d="M1825.500 930.500L1831 936" stroke="#222" stroke-width="2.300"/>
<rect x="1862" y="913" width="14" height="14" fill="url(#win)"/><rect x="1877" y="913" width="14" height="14" fill="url(#win)"/><rect x="1862" y="928" width="14" height="14" fill="url(#win)"/><rect x="1877" y="928" width="14" height="14" fill="url(#win)"/>
</svg>
</body></html>
